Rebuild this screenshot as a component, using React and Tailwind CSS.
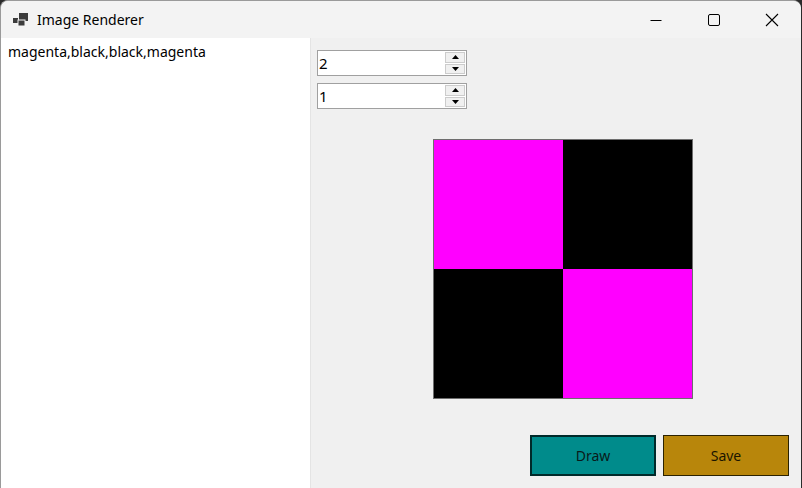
import React from 'react';

const font = { fontFamily: '"Noto Sans", "Open Sans", sans-serif' };

const cells = ['magenta', 'black', 'black', 'magenta'];

const Spinner = ({ value }) => (
  <div className="flex h-[26px] w-[150px] items-stretch border border-[#a0a0a0] bg-white">
    <span className="flex-1 pl-[1px] text-[15px] leading-[24px] text-black">{value}</span>
    <div className="my-[1px] mr-[1px] flex w-[20px] flex-col gap-[1px]">
      <div className="flex flex-1 items-center justify-center border border-[#cccccc] bg-[#f0f0f0]">
        <svg width="7" height="4" viewBox="0 0 7 4"><path d="M3.5 0L7 4H0z" fill="#000" /></svg>
      </div>
      <div className="flex flex-1 items-center justify-center border border-[#cccccc] bg-[#f0f0f0]">
        <svg width="7" height="4" viewBox="0 0 7 4"><path d="M0 0h7L3.5 4z" fill="#000" /></svg>
      </div>
    </div>
  </div>
);

const App = () => {
  return (
    <div className="h-[488px] w-[802px] overflow-hidden bg-[#2b2b2b]" style={font}>
      <div className="flex h-[488px] w-[801px] flex-col overflow-hidden rounded-tl-lg rounded-tr-lg border-l border-t border-[#9a9a9a] bg-[#f0f0f0]">
        {/* title bar */}
        <div className="flex h-[37px] shrink-0 items-center bg-[#f3f3f3]">
          <svg className="ml-[12px]" width="16" height="16" viewBox="0 0 16 16">
            <rect x="0" y="6" width="5" height="5" fill="#3b3b3b" />
            <rect x="6" y="1" width="9" height="8" fill="#3b3b3b" />
            <rect x="5" y="8" width="7" height="6" fill="#3b3b3b" stroke="#f3f3f3" strokeWidth="1" />
          </svg>
          <span className="ml-[8px] text-[14px] text-black">Image Renderer</span>
          <div className="ml-auto flex h-full">
            <div className="flex w-[58px] items-center justify-center">
              <svg width="12" height="12" viewBox="0 0 12 12"><path d="M0.5 6.5h11" stroke="#000" strokeWidth="1" /></svg>
            </div>
            <div className="flex w-[58px] items-center justify-center">
              <svg width="12" height="12" viewBox="0 0 12 12"><rect x="0.5" y="0.5" width="11" height="11" rx="1.5" fill="none" stroke="#000" strokeWidth="1" /></svg>
            </div>
            <div className="flex w-[58px] items-center justify-center">
              <svg width="14" height="14" viewBox="0 0 14 14"><path d="M1 1l12 12M13 1L1 13" stroke="#000" strokeWidth="1.1" /></svg>
            </div>
          </div>
        </div>
        {/* client area */}
        <div className="flex flex-1">
          <div className="w-[310px] shrink-0 border-r border-[#e4e4e4] bg-white px-[7px] pt-[4px]">
            <p className="text-[14px] leading-[20px] text-black">{cells.join(',')}</p>
          </div>
          <div className="flex flex-1 flex-col pl-[6px] pt-[12px] pr-[12px]">
            <div className="flex flex-col gap-[7px]">
              <Spinner value="2" />
              <Spinner value="1" />
            </div>
            <div className="ml-[116px] mt-[30px] grid h-[260px] w-[260px] grid-cols-2 border border-[#6e6e6e]">
              {cells.map((c, i) => (
                <div key={i} className={c === 'magenta' ? 'bg-[#ff00ff]' : 'bg-black'} />
              ))}
            </div>
            <div className="mt-[36px] flex justify-end gap-[7px]">
              <button className="h-[41px] w-[126px] border-2 border-[#002a2a] bg-[#008b8b] text-[14px] text-[#0a1a1a]">
                Draw
              </button>
              <button className="h-[41px] w-[126px] border border-[#2b2200] bg-[#b8860b] text-[14px] text-[#1a1400]">
                Save
              </button>
            </div>
          </div>
        </div>
      </div>
    </div>
  );
};

export default App;
